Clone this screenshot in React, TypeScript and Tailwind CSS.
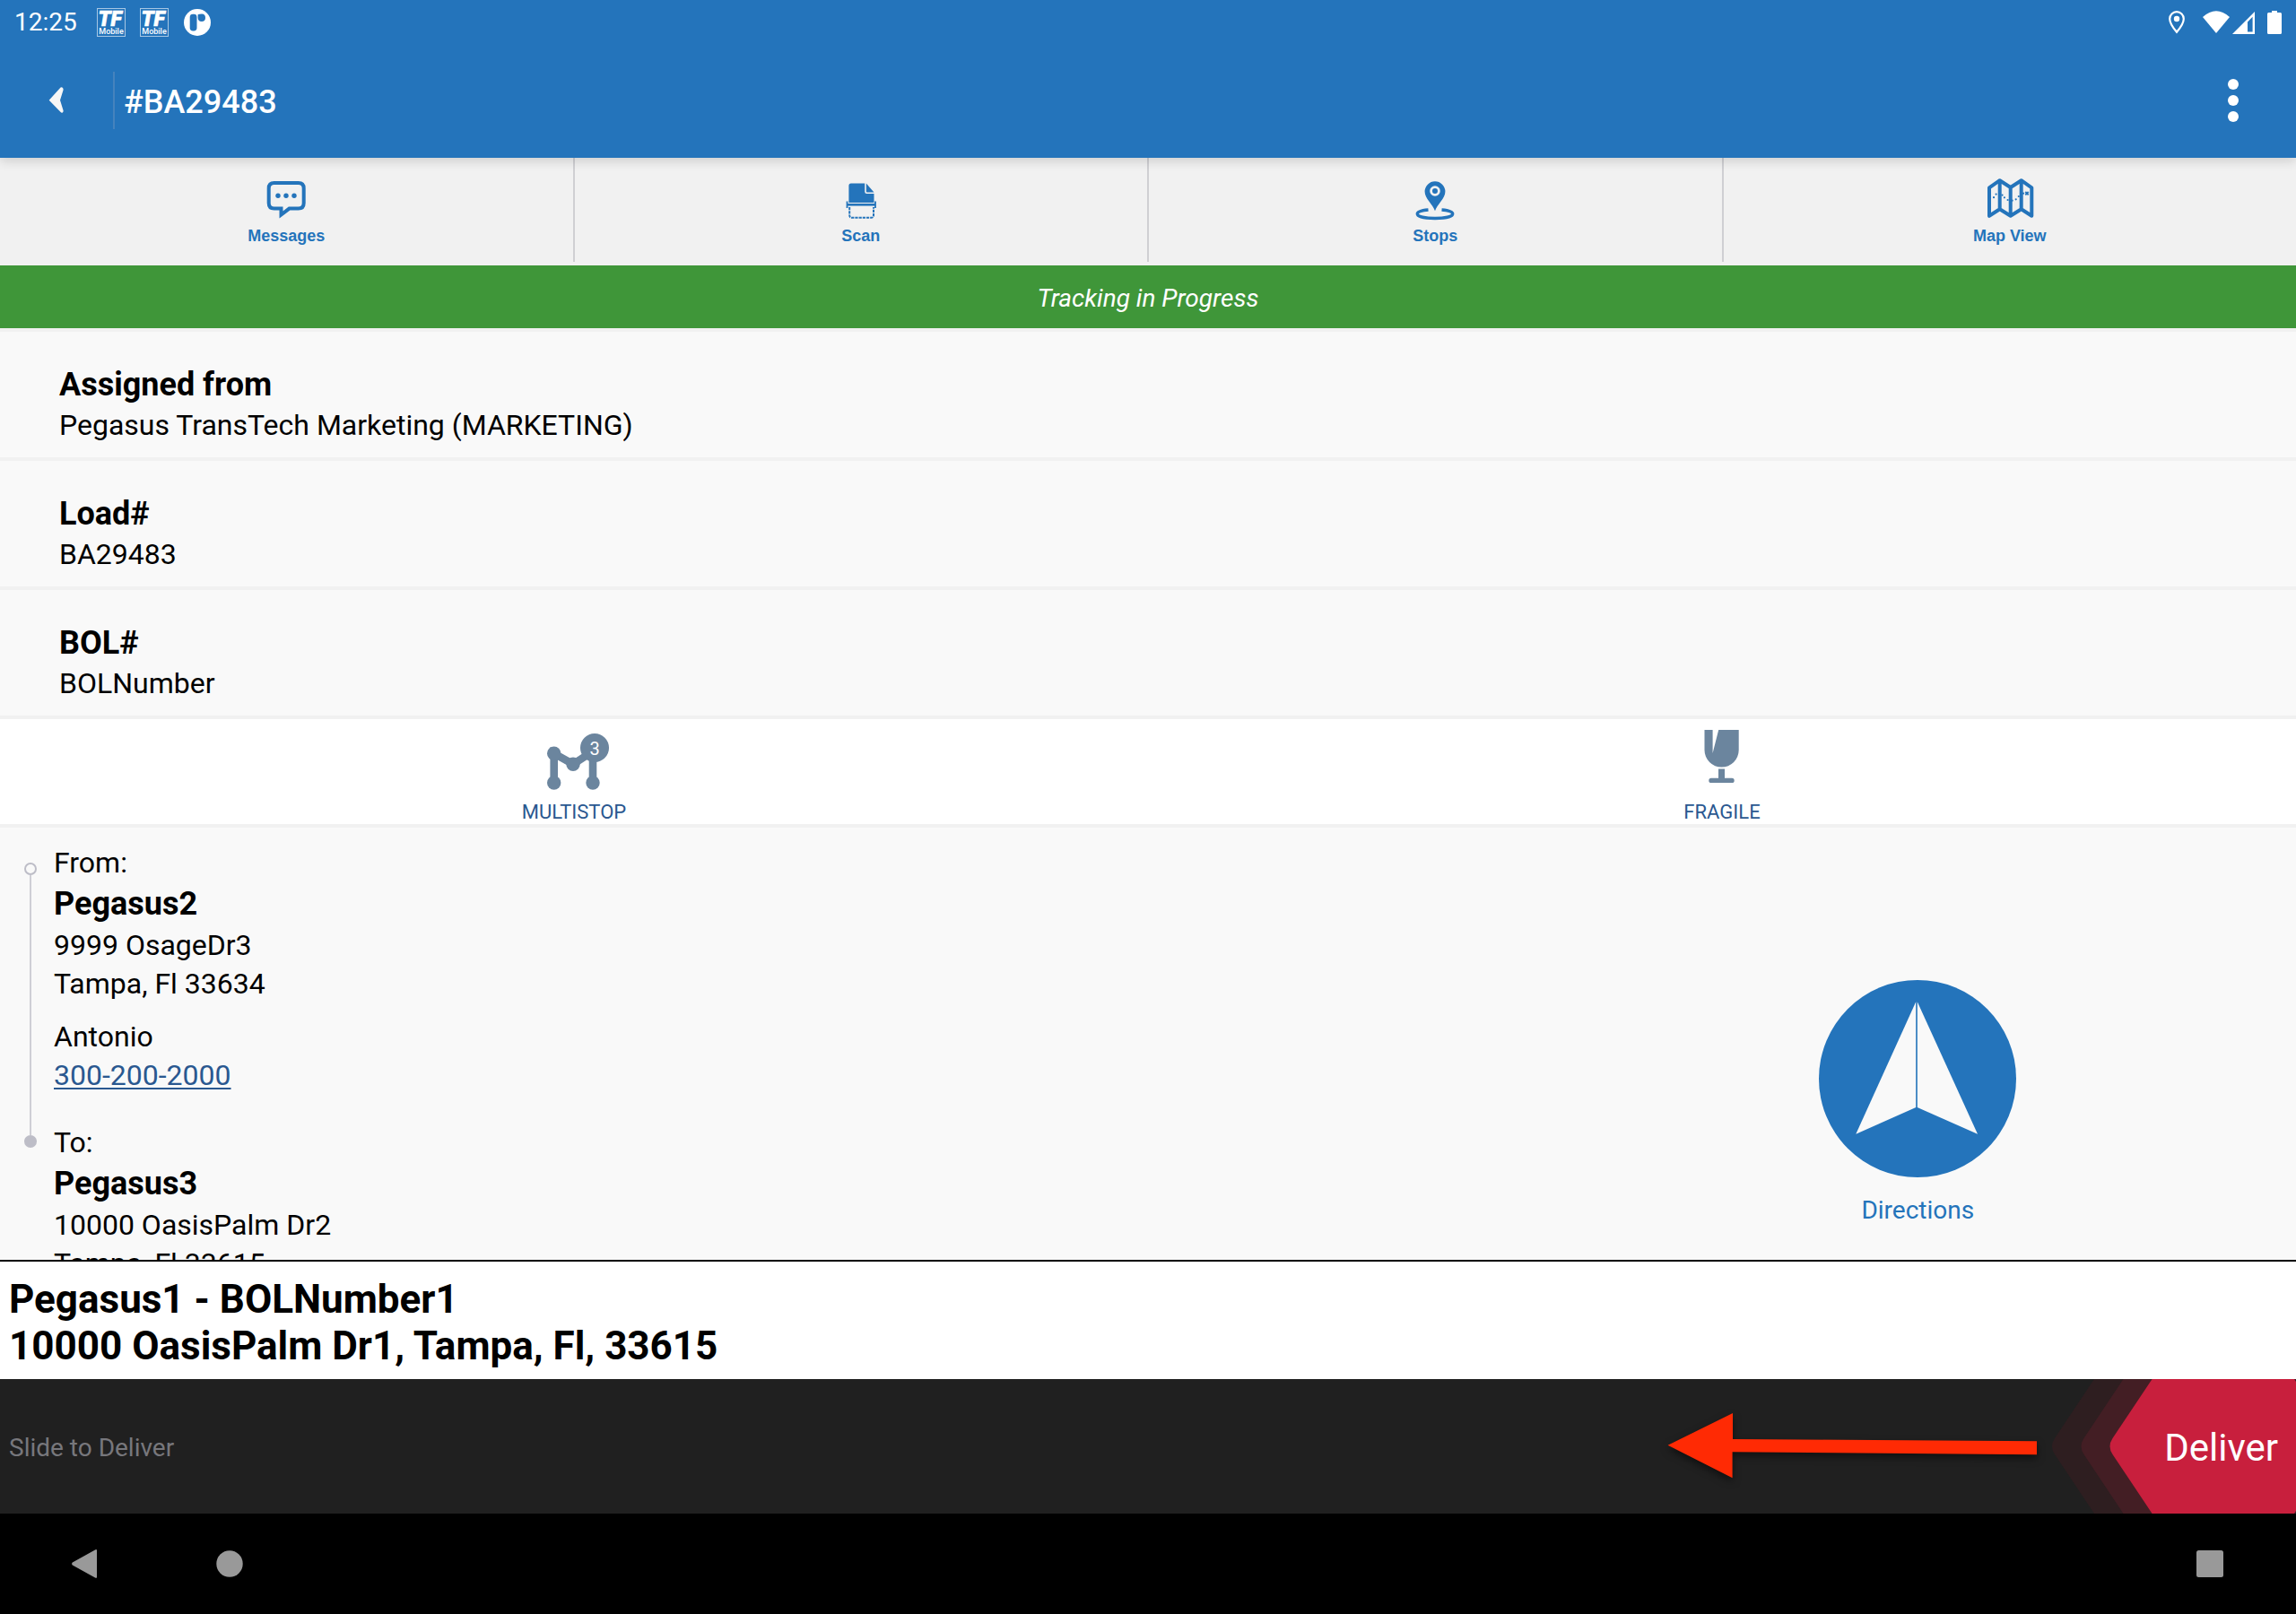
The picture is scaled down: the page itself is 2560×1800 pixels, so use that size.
import type { ReactNode } from "react";

interface Field {
  label: string;
  value: string;
}

const fields: Field[] = [
  { label: "Assigned from", value: "Pegasus TransTech Marketing (MARKETING)" },
  { label: "Load#", value: "BA29483" },
  { label: "BOL#", value: "BOLNumber" },
];

function TFMobileIcon() {
  return (
    <svg width="32" height="32" viewBox="0 0 32 32" className="shrink-0">
      <rect x="0.5" y="0.5" width="31" height="31" fill="none" stroke="#fff" strokeOpacity="0.6" />
      <text
        x="1.5"
        y="20"
        fill="#fff"
        stroke="#fff"
        strokeWidth="0.7"
        fontFamily="Roboto, sans-serif"
        fontSize="23"
        fontWeight="900"
        fontStyle="italic"
      >
        TF
      </text>
      <text x="16" y="29" fill="#fff" fontFamily="Roboto, sans-serif" fontSize="9" fontWeight="500" textAnchor="middle">
        Mobile
      </text>
    </svg>
  );
}

function StatusBar() {
  return (
    <div className="flex h-12 items-center justify-between px-4 pt-0.5">
      <div className="flex items-center gap-4">
        <span className="mr-1.5 text-[28px] leading-8">12:25</span>
        <TFMobileIcon />
        <TFMobileIcon />
        <svg width="32" height="32" viewBox="0 0 32 32">
          <circle cx="16" cy="16" r="15" fill="#fff" />
          <rect x="7.7" y="6.7" width="7.8" height="18.8" rx="3.4" fill="#2474bb" />
          <path d="M16.6 7.2 q1.6-.6 4.4-.6 a4.2 4.2 0 1 1-4.4 4.2z" fill="#2474bb" />
        </svg>
      </div>
      {/* location, wifi, signal, battery */}
      <svg width="126" height="26" viewBox="0 0 126 26" fill="#fff">
        <path
          d="M9 1.2 a7.8 7.8 0 0 0-7.8 7.8 c0 5.6 7.8 14.8 7.8 14.8 s7.8-9.2 7.8-14.8 A7.8 7.8 0 0 0 9 1.2z"
          fill="none"
          stroke="#fff"
          strokeWidth="2.2"
        />
        <circle cx="9" cy="9" r="3.2" />
        <path d="M38 7 Q53-6.500 68 7 L53 25z" />
        <path d="M96 1 V26 H71z M93.600 6.800 L88 12.400 V23.600 H93.600z" fillRule="evenodd" />
        <path d="M115 0 h6 v2 h3.500 q1.500 0 1.500 1.500 V24.500 q0 1.500-1.500 1.500 H111.500 q-1.500 0-1.500-1.500 V3.500 q0-1.500 1.500-1.500 H115z" />
      </svg>
    </div>
  );
}

function Header() {
  return (
    <header className="relative z-10 bg-[#2474bb] text-white shadow-[0_3px_12px_rgba(0,0,0,0.16)]">
      <StatusBar />
      <div className="flex h-32 items-center">
        <button aria-label="Back" className="flex h-full w-[126px] items-center justify-center">
          <svg width="18" height="30" viewBox="0 0 18 30" fill="#f6f6f6">
            <path d="M.7 14.700 L13.600 .6 Q14.600-.2 15.800 .8 Q16.900 1.900 16.500 3.500 L13 14.700 L16.500 26 Q16.900 27.500 15.800 28.400 Q14.600 29 13.600 28z" />
          </svg>
        </button>
        <div className="h-16 w-0.5 bg-[#4583bd]" />
        <h1 className="flex-1 pt-[3px] pl-2.5 text-4xl font-medium">#BA29483</h1>
        <button aria-label="More options" className="flex h-full w-[140px] items-center justify-center">
          <svg width="12" height="48" viewBox="0 0 12 48" fill="#fff">
            <circle cx="6" cy="6" r="6" />
            <circle cx="6" cy="24" r="6" />
            <circle cx="6" cy="42" r="6" />
          </svg>
        </button>
      </div>
    </header>
  );
}

function Tab({ label, children }: { label: string; children: ReactNode }) {
  return (
    <button className="flex flex-1 flex-col items-center gap-1 pt-[22px] pb-5">
      <svg width="52" height="48" viewBox="0 0 52 48" fill="none" className="overflow-visible">
        {children}
      </svg>
      <span className="font-['Liberation_Sans',sans-serif] text-lg leading-[26px] font-bold">{label}</span>
    </button>
  );
}

function Separator() {
  return <div className="mb-1 w-0.5 bg-[#cfcfd3]" />;
}

function Tabs() {
  return (
    <nav className="flex h-[120px] bg-[#f1f1f1] text-[#2474bb]">
      <Tab label="Messages">
        <path
          d="M12.700 6 H39.700 q6 0 6 6 V28.600 q0 6-6 6 H29.500 L20.500 41.500 V34.600 H12.700 q-6 0-6-6 V12 q0-6 6-6z"
          stroke="currentColor"
          strokeWidth="4"
        />
        <g fill="currentColor">
          <circle cx="17" cy="20.300" r="2.700" />
          <circle cx="26" cy="20.300" r="2.700" />
          <circle cx="35" cy="20.300" r="2.700" />
        </g>
      </Tab>
      <Separator />
      <Tab label="Scan">
        <g fill="currentColor">
          <path d="M12.400 28 V9 q0-2.500 2.500-2.500 H30.200 V15.800 q0 2.200 2.200 2.200 H40.500 V28z" />
          <path d="M31.800 6.500 L40.500 16.600 H32.800 q-1 0-1-1z" />
        </g>
        <g stroke="currentColor">
          <path d="M10.500 26.500 V34 M42 26.500 V34" strokeWidth="1.800" />
          <path d="M10.500 30.300 H42" strokeWidth="2.600" />
          <path
            d="M13.200 33 V42 q0 2.800 2.800 2.800 H37.200 q2.800 0 2.800-2.800 V33"
            strokeWidth="2"
            strokeDasharray="3.200 1"
          />
        </g>
      </Tab>
      <Separator />
      <Tab label="Stops">
        <path
          d="M18.500 36 C10 36.700 6.300 38.400 6.300 40.600 c0 3 9 4.900 19.700 4.900 s19.700-1.900 19.700-4.900 c0-2.200-3.700-3.900-12.200-4.600"
          stroke="currentColor"
          strokeWidth="3.400"
        />
        <path
          d="M26 37.300 C23.500 29.500 14.600 23.500 14.600 15.700 a11.400 11.400 0 0 1 22.800 0 C37.400 23.500 28.500 29.500 26 37.300z"
          fill="currentColor"
        />
        <circle cx="26" cy="15" r="4.400" stroke="#f1f1f1" strokeWidth="2.800" />
      </Tab>
      <Separator />
      <Tab label="Map View">
        <path
          d="M3 11.300 L14.700 3.200 L26.700 11 L38.700 3.200 L50.300 11.300 V42.800 L38.700 35.300 L26.700 42.800 L14.700 35.300 L3 42.800z M14.700 3.200 V35.300 M26.700 11 V42.800 M38.700 3.200 V35.300"
          stroke="currentColor"
          strokeWidth="4"
          strokeLinejoin="round"
        />
        <path
          d="M8 22.200 h.01 M10.600 18.600 h.01 M17.500 19.600 h.01 M19.900 22.300 h.01 M23.600 25 h.01 M28.600 25.700 h.01 M32.700 24.300 h.01 M35.800 21 h.01 M41 17.700 h.01"
          stroke="currentColor"
          strokeWidth="2.200"
          strokeLinecap="round"
        />
        <path d="M43.300 16 l3.400 3.400 M46.700 16 l-3.400 3.400" stroke="currentColor" strokeWidth="1.800" />
      </Tab>
    </nav>
  );
}

function FieldRow({ label, value }: Field) {
  return (
    <div className="border-b-4 border-[#f1f1f1] px-[66px] pt-[35px] pb-3.5">
      <dt className="text-4xl leading-[48px] font-bold">{label}</dt>
      <dd className="text-[32px] leading-[43px]">{value}</dd>
    </div>
  );
}

function Attributes() {
  return (
    <div className="grid grid-cols-2 border-b-4 border-[#f1f1f1] bg-white text-[22px] leading-[27px] text-[#2a5890]">
      <div className="flex flex-col items-center gap-2 pt-3">
        <svg width="80" height="70" viewBox="0 0 80 70" fill="#6b859e">
          <path d="M17.700 59 V26.300 L39 38.300 L61 24 V59" fill="none" stroke="#6b859e" strokeWidth="8.600" />
          <circle cx="17.700" cy="26.300" r="7.700" />
          <circle cx="17.700" cy="59" r="7.700" />
          <circle cx="39" cy="38.300" r="7.700" />
          <circle cx="61" cy="59" r="7.700" />
          <circle cx="63" cy="20" r="16" />
          <text x="63" y="28" fill="#fff" fontSize="20" textAnchor="middle">
            3
          </text>
        </svg>
        <span>MULTISTOP</span>
      </div>
      <div className="flex flex-col items-center gap-2 pt-3">
        <svg width="80" height="70" viewBox="0 0 80 70" fill="#6b859e">
          <path d="M20.500 0 H29.600 V26 L36.200 0 H58.700 V22.500 a19.100 19.100 0 0 1-38.200 0z" />
          <path d="M36 43.400 H43 V53.700 H51 a2.700 2.700 0 0 1 0 5.400 H28 a2.700 2.700 0 0 1 0-5.400 H36z" />
        </svg>
        <span>FRAGILE</span>
      </div>
    </div>
  );
}

function Route() {
  return (
    <div className="flex">
      <div className="flex-1 pt-[18px] pl-[27px] text-[32px] leading-[43px]">
        <div className="flex gap-[19px]">
          <div className="flex w-3.5 flex-col items-center pt-[21px]">
            <div className="size-3.5 rounded-full border-2 border-[#bdbdc7]" />
            <div className="w-0.5 flex-1 bg-[#cfcfd6]" />
          </div>
          <div className="pb-8">
            <p>From:</p>
            <p className="text-4xl leading-[49px] font-bold">Pegasus2</p>
            <p>9999 OsageDr3</p>
            <p>Tampa, Fl 33634</p>
            <p className="mt-4">Antonio</p>
            <a href="tel:300-200-2000" className="block text-[#2a5890] underline decoration-2 underline-offset-3">
              300-200-2000
            </a>
          </div>
        </div>
        <div className="flex gap-[19px]">
          <div className="flex w-3.5 flex-col items-center">
            <div className="h-[13px] w-0.5 bg-[#cfcfd6]" />
            <div className="size-3.5 rounded-full bg-[#bdbdc7]" />
          </div>
          <div>
            <p>To:</p>
            <p className="text-4xl leading-[49px] font-bold">Pegasus3</p>
            <p>10000 OasisPalm Dr2</p>
            <p>Tampa, Fl 33615</p>
          </div>
        </div>
      </div>
      <div className="flex w-1/3 items-start justify-center pt-[170px] pl-2.5">
        <button className="flex flex-col items-center gap-[18px] text-[28px] leading-[38px] text-[#2474bb]">
          <svg width="220" height="220" viewBox="0 0 220 220" fill="#f9f9f9">
            <circle cx="110" cy="110" r="110" fill="#2474bb" />
            <path d="M108.200 24.300 V142 L41.300 171.700z" />
            <path d="M109.800 24.300 V142 L177 171.700z" />
          </svg>
          Directions
        </button>
      </div>
    </div>
  );
}

function DeliverSlider() {
  return (
    <div className="flex h-[150px] items-center bg-[#202020]">
      <span className="flex-1 pt-[3px] pl-2.5 text-[28px] text-[#77777c]">Slide to Deliver</span>
      <svg
        width="412"
        height="74"
        viewBox="0 0 412 74"
        className="mr-[17px] overflow-visible drop-shadow-[0_4px_4px_rgba(0,0,0,0.5)]"
      >
        <path d="M.6 35.700 L73 0 V29 L412 31.300 V46.300 L72.600 43.300 V72.300z" fill="#ff2a04" />
      </svg>
      <button className="relative flex h-full w-[272px] items-center justify-end pt-[3px] pr-5 text-[42px] text-white">
        <svg width="272" height="150" viewBox="0 0 272 150" className="absolute inset-0">
          <path d="M47 0 L3 66 Q-3 75 3 84 L47 150 H272 V0z" fill="#2e1e20" />
          <path d="M79.500 0 L35.500 66 Q29.500 75 35.500 84 L79.500 150 H272 V0z" fill="#431e24" />
          <path d="M111.600 0 L67.500 66 Q61.500 75 67.500 84 L111.600 150 H270 L272 147 V3 L270 0z" fill="#c81f3d" />
        </svg>
        <span className="relative">Deliver</span>
      </button>
    </div>
  );
}

function SystemNav() {
  return (
    <div className="flex h-28 items-center gap-32 bg-black px-20">
      <button aria-label="System back">
        <svg width="32" height="32" viewBox="0 0 32 32" fill="#999">
          <path d="M26 .5 Q28-.8 28 1.500 V30.500 Q28 32.800 26 31.500 L.8 17.500 Q-.6 16 .8 14.500z" />
        </svg>
      </button>
      <button aria-label="Home">
        <svg width="32" height="32" viewBox="0 0 32 32" fill="#999">
          <circle cx="16" cy="16" r="14.700" />
        </svg>
      </button>
      <button aria-label="Recent apps" className="ml-auto">
        <svg width="32" height="32" viewBox="0 0 32 32" fill="#999">
          <rect x="1" y="1" width="30" height="30" rx="2.500" />
        </svg>
      </button>
    </div>
  );
}

export default function App() {
  return (
    <div className="flex h-screen flex-col overflow-hidden bg-[#f9f9f9] font-[Roboto,sans-serif] text-black">
      <Header />
      <Tabs />
      <p className="border-b-4 border-[#f1f1f1] bg-[#3f9639] bg-clip-padding pt-[3px] text-center text-[28px] leading-[67px] text-white italic">
        Tracking in Progress
      </p>
      <main className="min-h-0 flex-1 overflow-hidden">
        <dl>
          {fields.map((field) => (
            <FieldRow key={field.label} {...field} />
          ))}
        </dl>
        <Attributes />
        <Route />
      </main>
      <footer>
        <div className="border-t-2 border-black bg-white px-2.5 pt-4 pb-[11px] text-[44px] leading-[52px] font-bold">
          <p>Pegasus1 - BOLNumber1</p>
          <p>10000 OasisPalm Dr1, Tampa, Fl, 33615</p>
        </div>
        <DeliverSlider />
        <SystemNav />
      </footer>
    </div>
  );
}
